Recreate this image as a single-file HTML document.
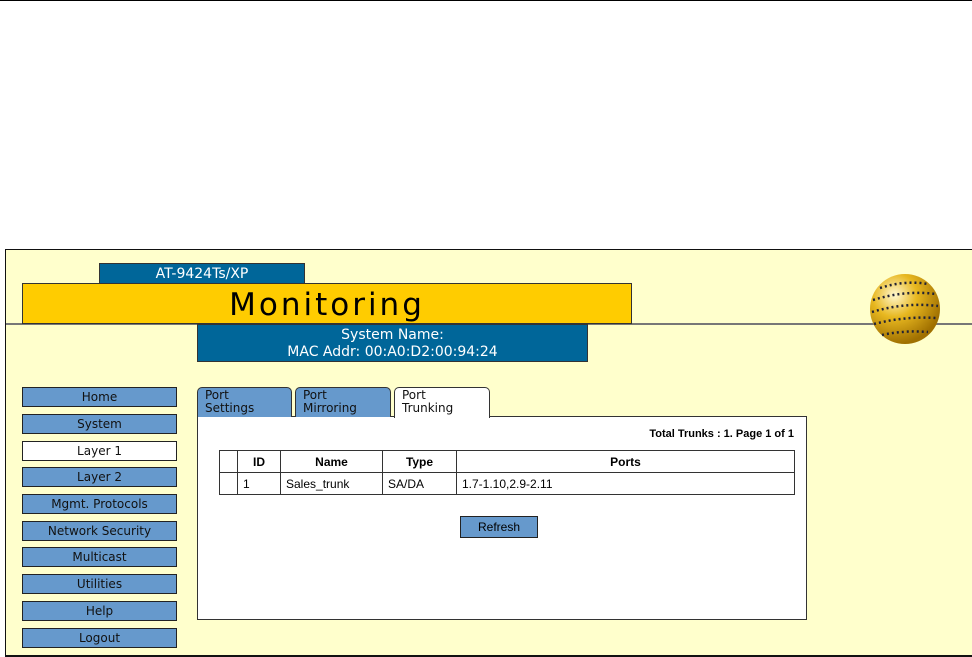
<!DOCTYPE html>
<html><head><style>
body{margin:0;width:972px;height:657px;background:#fff;position:relative;overflow:hidden;font-family:"DejaVu Sans","Liberation Sans",sans-serif}
.a{position:absolute;box-sizing:border-box}
.btn{position:absolute;left:22px;width:155px;height:20px;background:#6699cc;border:1px solid #222;font-size:12px;text-align:center;line-height:18px;color:#111;box-sizing:border-box}
.tab{position:absolute;top:387px;height:30px;background:#6699cc;border:1px solid #333;border-bottom:none;border-radius:5px 5px 0 0;font-size:12px;line-height:13px;padding:1px 0 0 7px;box-sizing:border-box;color:#111}
table{border-collapse:collapse;font-family:"Liberation Sans",sans-serif;font-size:12px}
td,th{border:1px solid #333;padding:0 5px;height:21px}
</style></head><body>
<div class="a" style="left:0;top:0;width:972px;height:2px;border-top:1px solid #000"></div>
<div class="a" style="left:5px;top:249px;width:975px;height:408px;background:#ffffcc;border:1px solid #111;border-bottom-width:2px"></div>
<div class="a" style="left:6px;top:323px;width:966px;height:2px;background:#777"></div>
<div class="a" style="left:99px;top:263px;width:206px;height:21px;background:#006699;border:1px solid #333;color:#fff;font-size:14px;text-align:center;line-height:20px">AT-9424Ts/XP</div>
<div class="a" style="left:22px;top:283px;width:610px;height:41px;background:#ffcc00;border:1px solid #333;font-size:31px;text-align:center;line-height:42px;letter-spacing:3px;color:#000">Monitoring</div>
<div class="a" style="left:197px;top:324px;width:391px;height:38px;background:#006699;border:1px solid #333;color:#fff;font-size:14px;text-align:center;line-height:17px;padding-top:2px">System Name:<br>MAC Addr: 00:A0:D2:00:94:24</div>
<svg class="a" style="left:868px;top:272px" width="75" height="75"><defs><radialGradient id="g" cx="35%" cy="30%" r="70%"><stop offset="0" stop-color="#fff8d0"/><stop offset=".45" stop-color="#e8b820"/><stop offset="1" stop-color="#a07000"/></radialGradient></defs><circle cx="37" cy="37" r="35" fill="url(#g)"/><g stroke="#223" stroke-width="2.5" stroke-dasharray="2 3" fill="none"><path d="M12 16 Q37 8 60 12"/><path d="M5 28 Q37 18 68 22"/><path d="M4 40 Q37 30 70 34"/><path d="M6 52 Q37 44 68 46"/><path d="M14 63 Q37 58 60 60"/></g></svg>
<div class="btn" style="top:387px">Home</div>
<div class="btn" style="top:414px">System</div>
<div class="btn" style="top:441px;background:#fff">Layer 1</div>
<div class="btn" style="top:467px">Layer 2</div>
<div class="btn" style="top:494px">Mgmt. Protocols</div>
<div class="btn" style="top:521px">Network Security</div>
<div class="btn" style="top:547px">Multicast</div>
<div class="btn" style="top:574px">Utilities</div>
<div class="btn" style="top:601px">Help</div>
<div class="btn" style="top:628px">Logout</div>
<div class="a" style="left:197px;top:416px;width:610px;height:204px;background:#fff;border:1px solid #333"></div>
<div class="tab" style="left:197px;width:95px">Port<br>Settings</div>
<div class="tab" style="left:295px;width:96px">Port<br>Mirroring</div>
<div class="tab" style="left:394px;width:96px;background:#fff;height:31px">Port<br>Trunking</div>
<div class="a" style="left:560px;top:428px;width:234px;text-align:right;font-size:11px;font-weight:bold;font-family:'Liberation Sans',sans-serif">Total Trunks : 1. Page 1 of 1</div>
<table class="a" style="left:219px;top:450px;width:576px">
<tr><th style="width:7px"></th><th style="width:32px">ID</th><th style="width:91px">Name</th><th style="width:63px">Type</th><th>Ports</th></tr>
<tr><td></td><td>1</td><td>Sales_trunk</td><td>SA/DA</td><td>1.7-1.10,2.9-2.11</td></tr>
</table>
<div class="a" style="left:460px;top:516px;width:78px;height:22px;background:#6699cc;border:1px solid #222;font-size:12px;text-align:center;line-height:20px;font-family:'Liberation Sans',sans-serif">Refresh</div>
</body></html>
